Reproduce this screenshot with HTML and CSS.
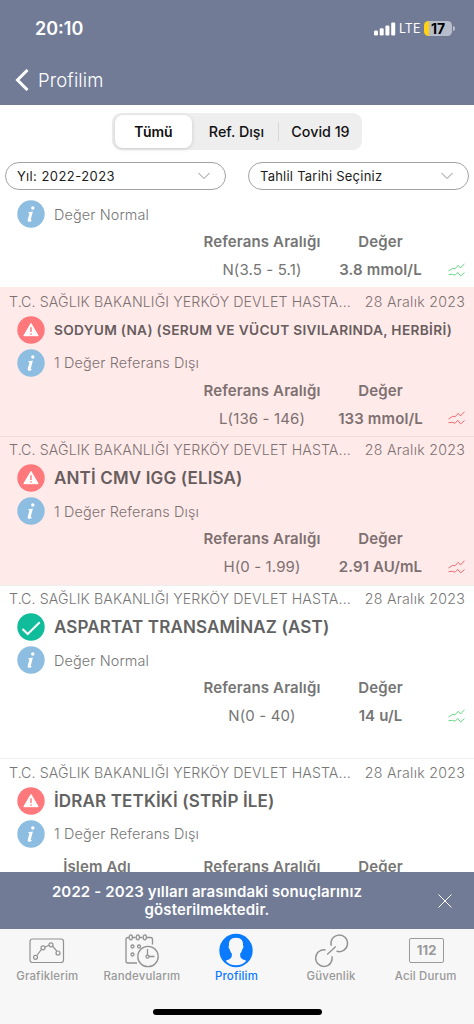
FILE: index.html
```
<!DOCTYPE html>
<html lang="tr">
<head>
    <meta charset="UTF-8">
    <meta name="viewport" content="width=device-width, initial-scale=1.0">
    <title>Tahlillerim</title>
    <link rel="stylesheet" href="styles.css">
</head>
<body>
    <svg class="defs" width="0" height="0">
        <symbol id="info" viewBox="0 0 28 28">
            <circle cx="14" cy="14" r="13.7" fill="#8dbde0"/>
            <circle cx="15.8" cy="8" r="1.7" fill="#fff"/>
            <path d="M11.3 12.3l4.6-.9-2.1 8.2c-.2.9.4 1 1.7-.2-.8 1.6-2 2.4-3.2 2.4-1.4 0-1.9-.9-1.5-2.3l1.5-5.6c.2-.8-.2-1-1.2-1z" fill="#fff"/>
        </symbol>
        <symbol id="alert" viewBox="0 0 28 28">
            <circle cx="14" cy="14" r="13.7" fill="#ff787c"/>
            <path d="M14 7.4L21.2 19.7H6.8z" fill="#fff" stroke="#fff" stroke-width="1" stroke-linejoin="round"/>
            <path d="M14 11.3v4.6M14 17.3v1.5" stroke="#ff787c" stroke-width="1.4"/>
        </symbol>
        <symbol id="ok" viewBox="0 0 28 28">
            <circle cx="14" cy="14" r="13.7" fill="#10bd9b"/>
            <path d="M5.5 16l5.2 5L22.7 9.2" fill="none" stroke="#fff" stroke-width="2"/>
        </symbol>
        <symbol id="trend" viewBox="0 0 17 14">
            <path d="M.5 8l4.2-2.7 2.3.5 3.2-3.5L12.5 5l4-4.3M.5 11.7l4.2-.4 2.3 1 2.8-2.9 2.8 3.5 3.9-3.3" fill="none" stroke="currentColor" stroke-width="1"/>
        </symbol>
    </svg>

    <div class="screen">
        <header class="header">
            <div class="status">
                <span class="time">20:10</span>
                <svg class="signal" width="22" height="14" viewBox="0 0 22 14" fill="#fff">
                    <rect x="0" y="8.5" width="4" height="5" rx="1.2"/>
                    <rect x="5.7" y="6.3" width="4" height="7.2" rx="1.2"/>
                    <rect x="11.4" y="3.5" width="4" height="10" rx="1.2"/>
                    <rect x="17.2" y=".5" width="4" height="13" rx="1.2"/>
                </svg>
                <span class="network">LTE</span>
                <span class="battery">17</span>
                <span class="battery-tip"></span>
            </div>
            <div class="nav">
                <svg width="14" height="22" viewBox="0 0 14 22">
                    <path d="M12.5 1L2.5 11l10 10" fill="none" stroke="#fff" stroke-width="3"/>
                </svg>
                <span class="nav-title">Profilim</span>
            </div>
        </header>

        <div class="segments">
            <div class="segment active">Tümü</div>
            <div class="segment ref">Ref. Dışı</div>
            <div class="segment covid">Covid 19</div>
        </div>

        <div class="filters">
            <div class="select">
                <span class="year">Yıl: 2022-2023</span>
                <svg width="12" height="8" viewBox="0 0 12 8"><path d="M.5 1L6 6.5 11.5 1" fill="none" stroke="#8e8e93"/></svg>
            </div>
            <div class="select">
                <span>Tahlil Tarihi Seçiniz</span>
                <svg width="12" height="8" viewBox="0 0 12 8"><path d="M.5 1L6 6.5 11.5 1" fill="none" stroke="#8e8e93"/></svg>
            </div>
        </div>

        <main class="list">
            <section class="item partial">
                <div class="info"><svg class="badge"><use href="#info"/></svg><span>Değer Normal</span></div>
                <div class="row head"><span></span><span>Referans Aralığı</span><span>Değer</span></div>
                <div class="row values"><span></span><span>N(3.5 - 5.1)</span><b>3.8 mmol/L</b><svg class="trend"><use href="#trend"/></svg></div>
            </section>

            <section class="item out">
                <div class="place"><span class="hospital">T.C. SAĞLIK BAKANLIĞI YERKÖY DEVLET HASTA...</span><span class="date">28 Aralık 2023</span></div>
                <div class="title"><svg class="badge"><use href="#alert"/></svg><h2 class="long">SODYUM (NA) (SERUM VE VÜCUT SIVILARINDA, HERBİRİ)</h2></div>
                <div class="info"><svg class="badge"><use href="#info"/></svg><span>1 Değer Referans Dışı</span></div>
                <div class="row head"><span></span><span>Referans Aralığı</span><span>Değer</span></div>
                <div class="row values"><span></span><span>L(136 - 146)</span><b>133 mmol/L</b><svg class="trend"><use href="#trend"/></svg></div>
            </section>

            <section class="item out">
                <div class="place"><span class="hospital">T.C. SAĞLIK BAKANLIĞI YERKÖY DEVLET HASTA...</span><span class="date">28 Aralık 2023</span></div>
                <div class="title"><svg class="badge"><use href="#alert"/></svg><h2>ANTİ CMV IGG (ELISA)</h2></div>
                <div class="info"><svg class="badge"><use href="#info"/></svg><span>1 Değer Referans Dışı</span></div>
                <div class="row head"><span></span><span>Referans Aralığı</span><span>Değer</span></div>
                <div class="row values"><span></span><span>H(0 - 1.99)</span><b>2.91 AU/mL</b><svg class="trend"><use href="#trend"/></svg></div>
            </section>

            <section class="item tall">
                <div class="place"><span class="hospital">T.C. SAĞLIK BAKANLIĞI YERKÖY DEVLET HASTA...</span><span class="date">28 Aralık 2023</span></div>
                <div class="title"><svg class="badge"><use href="#ok"/></svg><h2>ASPARTAT TRANSAMİNAZ (AST)</h2></div>
                <div class="info"><svg class="badge"><use href="#info"/></svg><span>Değer Normal</span></div>
                <div class="row head"><span></span><span>Referans Aralığı</span><span>Değer</span></div>
                <div class="row values"><span></span><span>N(0 - 40)</span><b>14 u/L</b><svg class="trend"><use href="#trend"/></svg></div>
            </section>

            <section class="item multi">
                <div class="place"><span class="hospital">T.C. SAĞLIK BAKANLIĞI YERKÖY DEVLET HASTA...</span><span class="date">28 Aralık 2023</span></div>
                <div class="title"><svg class="badge"><use href="#alert"/></svg><h2>İDRAR TETKİKİ (STRİP İLE)</h2></div>
                <div class="info"><svg class="badge"><use href="#info"/></svg><span>1 Değer Referans Dışı</span></div>
                <div class="row head"><span>İşlem Adı</span><span>Referans Aralığı</span><span>Değer</span></div>
            </section>
        </main>

        <div class="notice">
            <p>2022 - 2023 yılları arasındaki sonuçlarınız gösterilmektedir.</p>
            <svg width="14" height="14" viewBox="0 0 14 14"><path d="M.5.5l13 13M13.5.5l-13 13" stroke="#fff" stroke-width="1"/></svg>
        </div>

        <nav class="tabs">
            <div class="tab">
                <svg width="36" height="36" viewBox="0 0 36 36" fill="none" stroke="#929292" stroke-width="1.2">
                    <rect x="1" y="6" width="33.5" height="23.5" rx="2.5"/>
                    <path d="M7.8 22.5l4.9-6.3M16.1 14l4-1.7M23.9 13.5l3.9 4.7"/>
                    <circle cx="6.5" cy="24.3" r="2"/>
                    <circle cx="14" cy="14.8" r="2"/>
                    <circle cx="22" cy="11.8" r="2"/>
                    <circle cx="29" cy="20" r="2"/>
                </svg>
                <span>Grafiklerim</span>
            </div>
            <div class="tab">
                <svg width="36" height="36" viewBox="0 0 36 36" fill="none" stroke="#929292" stroke-width="1.3">
                    <path d="M4.8 4.5H4q-2 0-2 2V28q0 2 2 2h9M8.5 4.5h3M15.5 4.5h3M22.5 4.5h4q2 0 2 2v5"/>
                    <ellipse cx="6.8" cy="4.3" rx="1.6" ry="2.5"/>
                    <ellipse cx="13.8" cy="4.3" rx="1.6" ry="2.5"/>
                    <ellipse cx="20.8" cy="4.3" rx="1.6" ry="2.5"/>
                    <circle cx="8.5" cy="13.5" r="1.5"/>
                    <circle cx="15" cy="13.5" r="1.5"/>
                    <circle cx="8.5" cy="21.5" r="1.5"/>
                    <circle cx="24" cy="23.5" r="10.2"/>
                    <circle cx="23.5" cy="23.7" r="1.5"/>
                    <path d="M23.5 16v6M25 23.5h5.5"/>
                </svg>
                <span>Randevularım</span>
            </div>
            <div class="tab current">
                <svg width="36" height="36" viewBox="0 0 36 36">
                    <circle cx="18" cy="17.5" r="16.7" fill="#0a7aff"/>
                    <path d="M18 4.8c-5.2 0-7.4 3-7 7.6-.8.4-.4 3.2.8 4 .4 2 1.1 3 2 4 .3 4.3-.7 5.3-6.1 7.3 2.6 3 6 4.6 10.3 4.6s7.7-1.6 10.3-4.6c-5.4-2-6.4-3-6.1-7.3.9-1 1.6-2 2-4 1.2-.8 1.6-3.6.8-4 .4-4.6-1.8-7.6-7-7.6z" fill="#f7f7f7"/>
                </svg>
                <span>Profilim</span>
            </div>
            <div class="tab">
                <svg width="36" height="36" viewBox="0 0 36 36" fill="none" stroke="#929292" stroke-width="1.4">
                    <path d="M18.3 12.8A8.3 8.3 0 1 1 23.5 18.2M19 23.2A8.3 8.3 0 1 1 12.6 17M14.2 21.5l8.5-8"/>
                </svg>
                <span>Güvenlik</span>
            </div>
            <div class="tab">
                <div class="emergency">112</div>
                <span>Acil Durum</span>
            </div>
        </nav>
        <div class="home"></div>
    </div>
</body>
</html>
```
FILE: styles.css
```
body {
    margin: 0;
    font-family: Inter, "Liberation Sans", sans-serif;
    background: #fff;
}
.defs {
    display: block;
}
.screen {
    display: flex;
    flex-direction: column;
    width: 474px;
    height: 1024px;
    overflow: hidden;
}
.header {
    height: 105px;
    flex: none;
    background: #717b96;
    color: #fff;
}
.status {
    display: flex;
    align-items: center;
    height: 57px;
    padding: 0 19px 0 35px;
}
.time {
    flex: 1;
    font-size: 18px;
    font-weight: 600;
}
.network {
    width: 21px;
    margin: 0 4px 0 3px;
    font-size: 12.5px;
}
.battery {
    width: 28px;
    height: 15px;
    border-radius: 4.5px;
    background: linear-gradient(to right, #ffd013 5px, #b7bdcb 5px);
    color: #000;
    font-size: 14px;
    font-weight: 700;
    line-height: 15px;
    text-align: center;
}
.battery-tip {
    width: 2px;
    height: 5px;
    margin-left: 1px;
    border-radius: 0 2px 2px 0;
    background: #b7bdcb;
}
.nav {
    display: flex;
    align-items: center;
    height: 46px;
    padding-left: 15px;
}
.nav-title {
    margin-left: 9px;
    font-size: 18.5px;
    font-weight: 300;
    letter-spacing: 0.15px;
}
.segments {
    display: flex;
    flex: none;
    width: 250px;
    height: 37px;
    box-sizing: border-box;
    margin: 8px 0 0 112px;
    padding: 2px 2px 2px 3px;
    border-radius: 9px;
    background: #eeeeef;
}
.segment {
    display: flex;
    align-items: center;
    justify-content: center;
    font-size: 14.3px;
    font-weight: 500;
    color: #111;
}
.active {
    width: 77px;
    border-radius: 8px;
    background: #fff;
    box-shadow: 0 1px 4px rgba(0,0,0,0.15);
    font-size: 14px;
    font-weight: 600;
}
.ref {
    width: 89px;
}
.covid {
    position: relative;
    width: 79px;
}
.covid::before {
    content: "";
    position: absolute;
    left: -3px;
    top: 7px;
    width: 1px;
    height: 19px;
    background: #d8d8da;
}
.filters {
    display: flex;
    flex: none;
    gap: 22px;
    padding: 12px 5px 0;
}
.select {
    display: flex;
    align-items: center;
    justify-content: space-between;
    width: 221px;
    height: 28px;
    box-sizing: border-box;
    padding: 0 15px 0 11px;
    border: 1px solid #a2a2a2;
    border-radius: 14px;
    font-size: 13px;
    letter-spacing: 0.23px;
    color: #1c1c1c;
}
.year {
    letter-spacing: 0.45px;
}
.list {
    flex: 1;
    min-height: 0;
    padding-top: 6.6px;
    overflow: hidden;
}
.item {
    height: 148.7px;
    box-sizing: border-box;
    border-top: 1px solid #eee;
    color: #757575;
}
.partial {
    height: 90.7px;
    border-top: none;
}
.tall {
    height: 173.6px;
}
.out {
    background: #ffeaea;
    border-color: #f4dcdd;
    color: #7d7070;
}
.partial + .out {
    border-color: #ffeaea;
}
.place {
    display: flex;
    align-items: center;
    justify-content: space-between;
    height: 26px;
    padding: 0 9px;
    font-size: 14.2px;
    font-weight: 300;
    white-space: nowrap;
}
.hospital {
    letter-spacing: 0.1px;
}
.date {
    letter-spacing: 0.25px;
}
.badge {
    width: 28px;
    height: 28px;
    margin-right: 9px;
    flex: none;
}
.title {
    display: flex;
    align-items: center;
    height: 31px;
    padding-left: 17px;
}
h2 {
    margin: 0;
    font-size: 17px;
    font-weight: 600;
    letter-spacing: 0.15px;
    color: #626262;
    white-space: nowrap;
}
.out h2 {
    color: #675d5d;
}
h2.long {
    font-size: 13.7px;
    letter-spacing: 0.31px;
}
.info {
    display: flex;
    align-items: center;
    height: 35px;
    padding-left: 17px;
    font-size: 14.4px;
    font-weight: 300;
    letter-spacing: 0.13px;
}
.row {
    display: grid;
    grid-template-columns: 194px 136px 101px 43px;
    align-items: center;
    justify-items: center;
    font-size: 15px;
    letter-spacing: 0.13px;
}
.head {
    height: 20px;
    font-weight: 600;
}
.values {
    height: 36px;
}
.values b {
    font-weight: 600;
}
.multi .head {
    margin-top: 5px;
}
.trend {
    width: 17px;
    height: 14px;
    margin-left: 8px;
    color: #67d985;
}
.out .trend {
    color: #ef6a70;
}
.notice {
    display: flex;
    align-items: center;
    justify-content: space-between;
    flex: none;
    height: 57px;
    box-sizing: border-box;
    padding: 0 22px 0 47px;
    background: #717b96;
    color: #fff;
}
.notice p {
    width: 320px;
    margin: 0;
    font-size: 15px;
    font-weight: 600;
    letter-spacing: 0.13px;
    line-height: 18px;
    text-align: center;
}
.tabs {
    display: flex;
    flex: none;
    height: 80px;
    padding: 4px 1px 0 0;
    box-sizing: border-box;
    background: #f7f7f7;
}
.tab {
    display: flex;
    flex: 1;
    flex-direction: column;
    align-items: center;
    font-size: 11.4px;
    font-weight: 500;
    letter-spacing: 0.2px;
    color: #999;
}
.tab span {
    white-space: nowrap;
}
.current {
    color: #0a7aff;
}
.emergency {
    width: 35px;
    height: 25px;
    box-sizing: border-box;
    margin: 5px 0 6px 2px;
    border: 1.5px solid #999;
    border-radius: 2px;
    font-size: 13px;
    font-weight: 700;
    line-height: 23px;
    text-align: center;
}
.home {
    flex: none;
    height: 15px;
    background: #f7f7f7;
}
.home::before {
    content: "";
    display: block;
    width: 169px;
    height: 6px;
    margin: 0 auto;
    border-radius: 3px;
    background: #000;
}
```
